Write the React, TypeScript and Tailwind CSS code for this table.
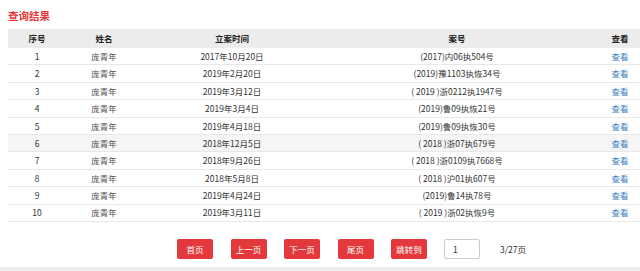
import React from "react";

const rows = [
  ["1", "庞青年", "2017年10月20日", "(2017)内06执504号"],
  ["2", "庞青年", "2019年2月20日", "(2019)豫1103执恢34号"],
  ["3", "庞青年", "2019年3月12日", "( 2019 )浙0212执1947号"],
  ["4", "庞青年", "2019年3月4日", "(2019)鲁09执恢21号"],
  ["5", "庞青年", "2019年4月18日", "(2019)鲁09执恢30号"],
  ["6", "庞青年", "2018年12月5日", "( 2018 )浙07执679号"],
  ["7", "庞青年", "2018年9月26日", "( 2018 )浙0109执7668号"],
  ["8", "庞青年", "2018年5月8日", "( 2018 )沪01执607号"],
  ["9", "庞青年", "2019年4月24日", "(2019)鲁14执78号"],
  ["10", "庞青年", "2019年3月11日", "( 2019 )浙02执恢9号"],
];

const cols = "grid grid-cols-[58px_76px_180px_270px_56px]";

export default function App() {
  return (
    <div
      className="w-[640px] h-[271px] bg-white flex flex-col overflow-hidden text-[#333]"
      style={{ fontFamily: '"Noto Sans CJK SC", "Noto Sans", sans-serif' }}
    >
      <div className="h-[29px] pt-[4px] pl-2 flex items-center">
        <span className="text-[10.5px] font-bold text-[#e4393c] leading-none">查询结果</span>
      </div>
      <div className="pl-2">
        <div className={`${cols} h-[19px] bg-[#ececec] items-center text-[8.5px] font-bold text-[#222] text-center leading-none`}>
          <div>序号</div>
          <div>姓名</div>
          <div>立案时间</div>
          <div>案号</div>
          <div>查看</div>
        </div>
        {rows.map((r, i) => (
          <div
            key={i}
            className={`${cols} h-[17.4px] items-center border-b border-[#e8e8e8] text-[8.5px] text-center leading-none ${i === 5 ? "bg-[#f5f5f5]" : "bg-white"}`}
          >
            <div>{r[0]}</div>
            <div className="text-[#555]">{r[1]}</div>
            <div>{r[2]}</div>
            <div className="whitespace-pre">{r[3]}</div>
            <div className="text-[#3a7ec2]">查看</div>
          </div>
        ))}
      </div>
      <div className="flex items-center h-[20px] mt-[17px] pl-[177px] text-[8.5px] leading-none">
        {["首页", "上一页", "下一页", "尾页", "跳转到"].map((t, i) => (
          <div
            key={t}
            className={`w-[36px] h-[20px] rounded-[2px] bg-[#e4393c] text-white flex items-center justify-center ${i > 0 ? "ml-[17.5px]" : ""}`}
          >
            {t}
          </div>
        ))}
        <div className="ml-[17px] w-[36px] h-[20px] border border-[#ccc] rounded-[2px] flex items-center pl-[8px] text-[#333]">
          1
        </div>
        <div className="ml-[20px] text-[#333]">3/27页</div>
      </div>
      <div className="mt-auto h-[4px] bg-[#eeeeee]" />
    </div>
  );
}
